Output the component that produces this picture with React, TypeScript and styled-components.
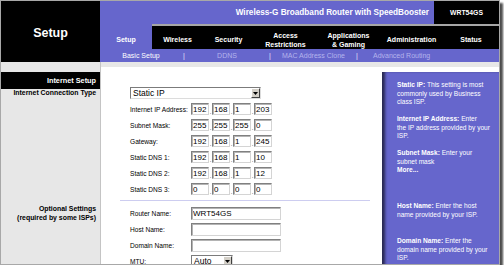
import React from 'react';
import styled, { createGlobalStyle } from 'styled-components';

const BLUE = '#6666cc';

const GlobalStyle = createGlobalStyle`
  html, body {
    margin: 0;
    padding: 0;
    background: #fff;
  }
  body {
    font-family: "Liberation Sans", Arial, sans-serif;
  }
`;

// Screenshot frame with its drop shadow
const Frame = styled.div`
  width: 498px;
  height: 263px;
  border: 1px solid #a8a8a8;
  box-shadow: 3px 3px 2px rgba(0, 0, 0, 0.7);
  overflow: hidden;
  background: #e7e7e7;
  display: flex;
  flex-direction: column;
`;

const Header = styled.header`
  display: grid;
  grid-template-columns: 99px 1fr;
  height: 61px;
`;

const Brand = styled.div`
  background: #000;
  color: #fff;
  font-weight: bold;
  font-size: 12.5px;
  display: flex;
  align-items: center;
  justify-content: center;
  padding-top: 3px;
`;

const HeaderRight = styled.div`
  display: flex;
  flex-direction: column;
`;

const TitleBar = styled.div`
  display: flex;
  height: 23px;
`;

const Title = styled.div`
  flex: 1;
  background: ${BLUE};
  color: #fff;
  font-weight: bold;
  font-size: 8.2px;
  display: flex;
  align-items: center;
  justify-content: flex-end;
  padding-right: 5px;
`;

const Model = styled.div`
  width: 65px;
  background: #000;
  color: #fff;
  font-weight: bold;
  font-size: 6.8px;
  display: flex;
  align-items: center;
  justify-content: center;
`;

const TabRow = styled.nav`
  display: flex;
  height: 25px;
`;

const Tab = styled.div<{ $active?: boolean; $width?: number }>`
  box-sizing: border-box;
  width: ${(p) => (p.$width ? `${p.$width}px` : 'auto')};
  flex: ${(p) => (p.$width ? 'none' : 1)};
  background: ${(p) => (p.$active ? BLUE : '#000')};
  border-top: ${(p) => (p.$active ? 'none' : '2px solid #a6a6a6')};
  padding-top: ${(p) => (p.$active ? '6px' : '4px')};
  color: #fff;
  font-weight: bold;
  font-size: 7px;
  line-height: 9px;
  text-align: center;
  display: flex;
  align-items: center;
  justify-content: center;
`;

const SubNav = styled.div`
  display: flex;
  align-items: center;
  height: 13px;
  background: ${BLUE};
  font-size: 7px;
`;

const SubItem = styled.div<{ $width?: number; $active?: boolean; $pad?: number }>`
  width: ${(p) => (p.$width ? `${p.$width}px` : 'auto')};
  padding-left: ${(p) => p.$pad || 0}px;
  text-align: ${(p) => (p.$pad ? 'left' : 'center')};
  color: ${(p) => (p.$active ? '#fff' : '#b4b4ec')};
  white-space: nowrap;
`;

const Pipe = styled.div`
  width: 4px;
  text-align: center;
  color: #e2e2f8;
`;

const Body = styled.div`
  flex: 1;
  display: grid;
  grid-template-columns: 99px 1fr;
`;

const LeftCol = styled.aside`
  background: #e7e7e7;
  padding-top: 10px;
  display: flex;
  flex-direction: column;
`;

const SectionBar = styled.div`
  height: 17px;
  background: #000;
  color: #fff;
  font-weight: bold;
  font-size: 7.3px;
  display: flex;
  align-items: center;
  justify-content: flex-end;
  padding-right: 4px;
`;

const SectionLabel = styled.div<{ $height?: number; $padTop: number; $lh: number }>`
  box-sizing: border-box;
  height: ${(p) => (p.$height ? `${p.$height}px` : 'auto')};
  padding: ${(p) => p.$padTop}px 4px 0 0;
  text-align: right;
  font-weight: bold;
  font-size: 6.9px;
  line-height: ${(p) => p.$lh}px;
  color: #000;
  white-space: nowrap;
`;

const RightArea = styled.div`
  border-left: 1px solid #c4c4c4;
  padding-top: 5px;
  display: flex;
`;

const Main = styled.main`
  flex: 1;
  background: #fff;
  display: grid;
  grid-template-columns: 281px 1fr;
`;

const Form = styled.div`
  padding-top: 18px;
  display: flex;
  flex-direction: column;
`;

const Row = styled.div`
  height: 16px;
  display: flex;
  align-items: center;
  padding-left: 29px;
`;

const Label = styled.span`
  width: 61px;
  font-size: 6.6px;
  color: #000;
  white-space: nowrap;
`;

const SelectBox = styled.div<{ $width: number }>`
  box-sizing: border-box;
  width: ${(p) => p.$width}px;
  height: 12px;
  border: 1px solid;
  border-color: #7b7b7b #dcdcdc #dcdcdc #7b7b7b;
  background: #fff;
  font-size: 8.5px;
  display: flex;
  align-items: center;
  justify-content: space-between;
  padding-left: 2px;
`;

const SelectArrow = styled.span`
  box-sizing: border-box;
  width: 9px;
  height: 10px;
  background: #d4d0c8;
  border: 1px solid;
  border-color: #fff #404040 #404040 #fff;
  display: flex;
  align-items: center;
  justify-content: center;
`;

const IpGroup = styled.div`
  display: flex;
  align-items: flex-end;
`;

const Dot = styled.span`
  width: 3px;
  font-size: 6px;
  line-height: 5px;
  text-align: center;
  color: #000;
`;

const Field = styled.input<{ $width: number; $height: number }>`
  box-sizing: border-box;
  width: ${(p) => p.$width}px;
  height: ${(p) => p.$height}px;
  margin: 0;
  padding: 0 1px;
  border: 1px solid;
  border-color: #808080 #d4d4d4 #d4d4d4 #808080;
  box-shadow: inset 1px 1px 0 #b4b4b4;
  background: #fff;
  font-family: "Liberation Sans", Arial, sans-serif;
  font-size: 8px;
  color: #000;
  outline: none;
`;

const Separator = styled.div`
  height: 1px;
  margin: 3px 12px 4px 19px;
  background: #cdcdf0;
`;

const Help = styled.aside`
  margin-top: 5px;
  background: ${BLUE};
  box-shadow: inset 4px 0 3px -1px rgba(0, 0, 0, 0.6);
  padding: 9px 0 0 15px;
  color: #fff;
  font-size: 6.6px;
  line-height: 8.5px;
  white-space: nowrap;
  overflow: hidden;
`;

const HelpBlock = styled.div<{ $gap: number }>`
  margin-top: ${(p) => p.$gap}px;
`;

const tabs = [
  { label: 'Setup', width: 52, active: true },
  { label: 'Wireless', width: 51 },
  { label: 'Security', width: 51 },
  { label: 'Access\nRestrictions', width: 63 },
  { label: 'Applications\n& Gaming', width: 63 },
  { label: 'Administration', width: 63 },
  { label: 'Status' }
];

const ipRows = [
  { label: 'Internet IP Address:', parts: ['192', '168', '1', '203'] },
  { label: 'Subnet Mask:', parts: ['255', '255', '255', '0'] },
  { label: 'Gateway:', parts: ['192', '168', '1', '245'] },
  { label: 'Static DNS 1:', parts: ['192', '168', '1', '10'] },
  { label: 'Static DNS 2:', parts: ['192', '168', '1', '12'] },
  { label: 'Static DNS 3:', parts: ['0', '0', '0', '0'] }
];

const Arrow = () => (
  <SelectArrow>
    <svg width="5" height="3" viewBox="0 0 5 3">
      <path d="M0 0h5L2.5 3z" fill="#000" />
    </svg>
  </SelectArrow>
);

const App = (): JSX.Element => (
  <>
    <GlobalStyle />
    <Frame>
      <Header>
        <Brand>Setup</Brand>
        <HeaderRight>
          <TitleBar>
            <Title>Wireless-G Broadband Router with SpeedBooster</Title>
            <Model>WRT54GS</Model>
          </TitleBar>
          <TabRow>
            {tabs.map((tab) => (
              <Tab key={tab.label} $active={tab.active} $width={tab.width}>
                <span>
                  {tab.label.split('\n').map((line, i) => (
                    <React.Fragment key={line}>
                      {i > 0 && <br />}
                      {line}
                    </React.Fragment>
                  ))}
                </span>
              </Tab>
            ))}
          </TabRow>
          <SubNav>
            <SubItem $width={82} $active>
              Basic Setup
            </SubItem>
            <Pipe>|</Pipe>
            <SubItem $width={82}>DDNS</SubItem>
            <Pipe>|</Pipe>
            <SubItem $width={83}>MAC Address Clone</SubItem>
            <Pipe>|</Pipe>
            <SubItem $pad={14}>Advanced Routing</SubItem>
          </SubNav>
        </HeaderRight>
      </Header>

      <Body>
        <LeftCol>
          <SectionBar>Internet Setup</SectionBar>
          <SectionLabel $height={108} $padTop={0} $lh={8}>
            Internet Connection Type
          </SectionLabel>
          <SectionLabel $padTop={7} $lh={9}>
            Optional Settings
            <br />
            (required by some ISPs)
          </SectionLabel>
        </LeftCol>

        <RightArea>
          <Main>
            <Form>
              <Row>
                <SelectBox $width={131}>
                  <span>Static IP</span>
                  <Arrow />
                </SelectBox>
              </Row>

              {ipRows.map((row) => (
                <Row key={row.label}>
                  <Label>{row.label}</Label>
                  <IpGroup>
                    {row.parts.map((part, i) => (
                      <React.Fragment key={i}>
                        {i > 0 && <Dot>.</Dot>}
                        <Field $width={18} $height={12} value={part} readOnly />
                      </React.Fragment>
                    ))}
                  </IpGroup>
                </Row>
              ))}

              <Separator />

              <Row>
                <Label>Router Name:</Label>
                <Field $width={90} $height={13} value="WRT54GS" readOnly />
              </Row>
              <Row>
                <Label>Host Name:</Label>
                <Field $width={90} $height={13} value="" readOnly />
              </Row>
              <Row>
                <Label>Domain Name:</Label>
                <Field $width={90} $height={13} value="" readOnly />
              </Row>
              <Row>
                <Label>MTU:</Label>
                <SelectBox $width={42}>
                  <span>Auto</span>
                  <Arrow />
                </SelectBox>
              </Row>
            </Form>

            <Help>
              <HelpBlock $gap={0}>
                <b>Static IP:</b> This setting is most
                <br />
                commonly used by Business
                <br />
                class ISP.
              </HelpBlock>
              <HelpBlock $gap={8.5}>
                <b>Internet IP Address:</b> Enter
                <br />
                the IP address provided by your
                <br />
                ISP.
              </HelpBlock>
              <HelpBlock $gap={8.5}>
                <b>Subnet Mask:</b> Enter your
                <br />
                subnet mask
                <br />
                <b>More...</b>
              </HelpBlock>
              <HelpBlock $gap={27.5}>
                <b>Host Name:</b> Enter the host
                <br />
                name provided by your ISP.
              </HelpBlock>
              <HelpBlock $gap={18}>
                <b>Domain Name:</b> Enter the
                <br />
                domain name provided by your
                <br />
                ISP.
                <br />
                <b>More...</b>
              </HelpBlock>
            </Help>
          </Main>
        </RightArea>
      </Body>
    </Frame>
  </>
);

export default App;
